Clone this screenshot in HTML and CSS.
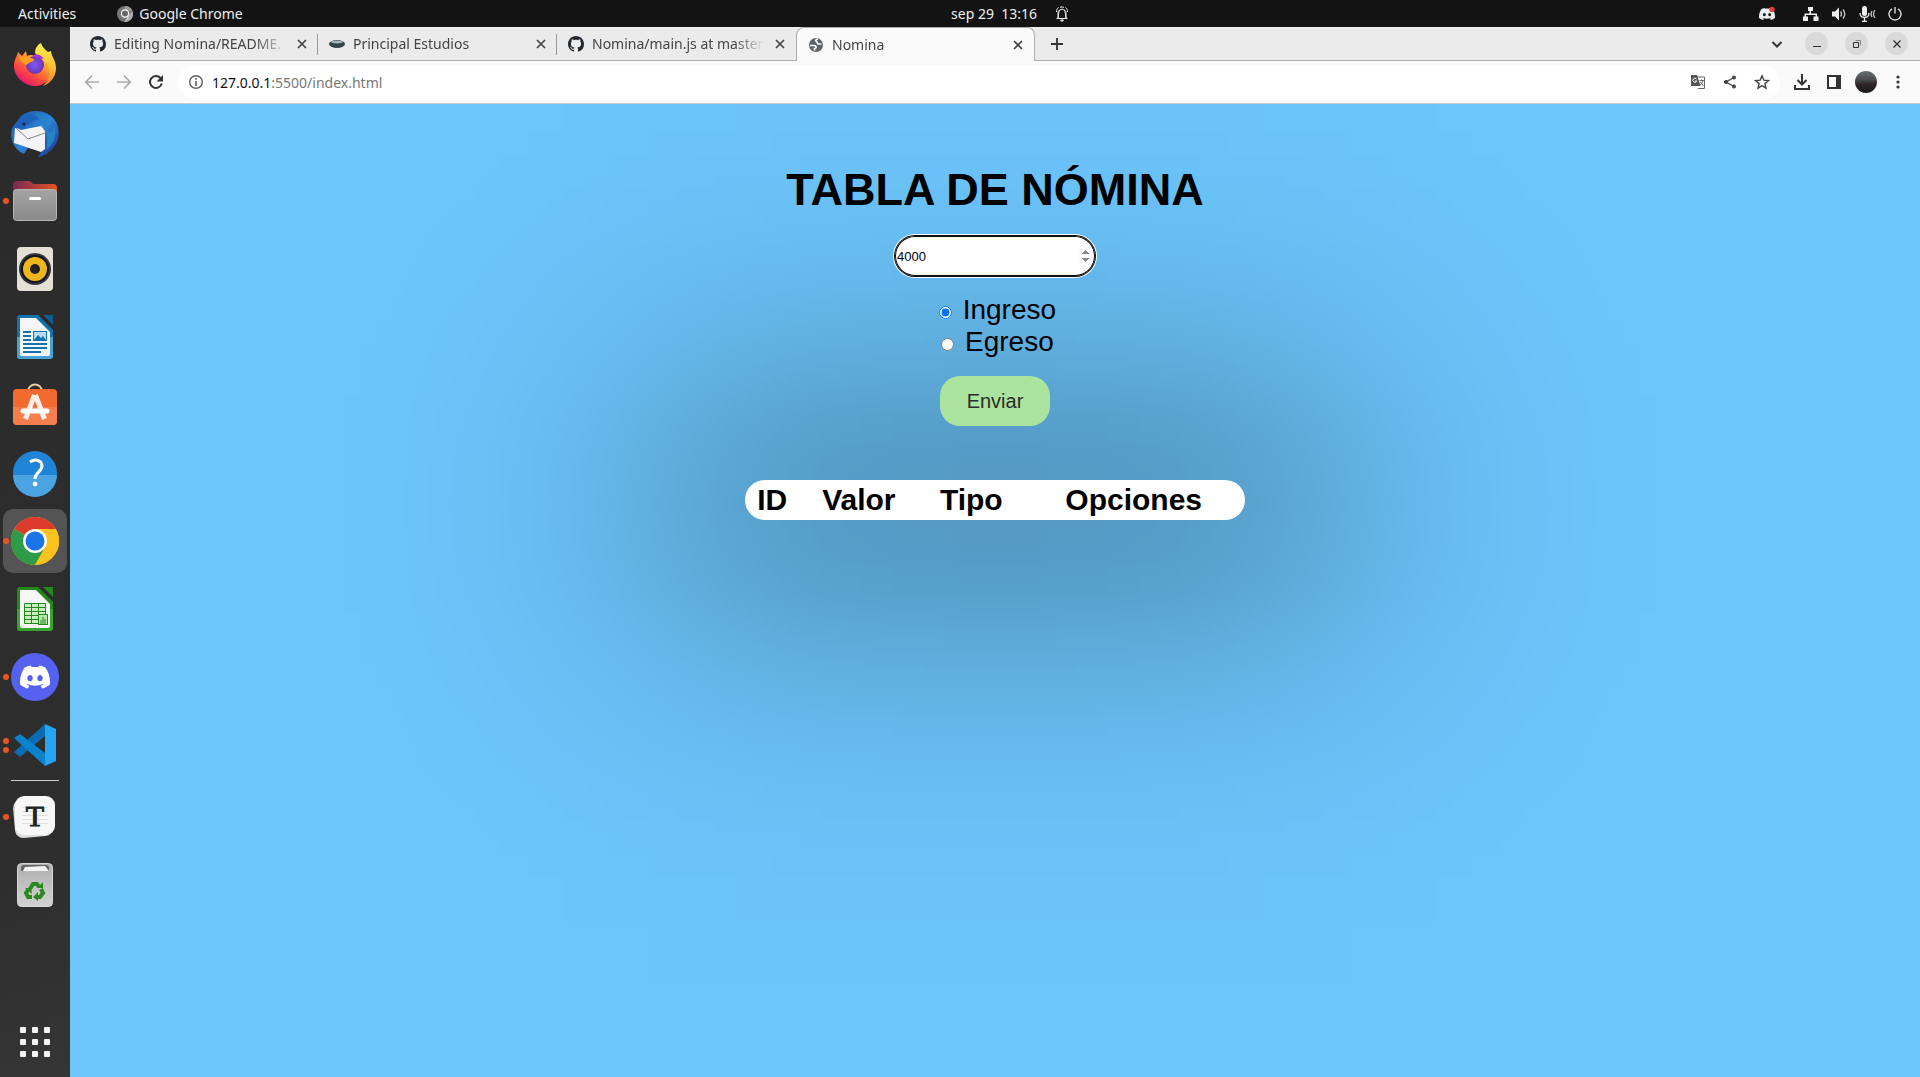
FILE: index.html
```html
<!DOCTYPE html>
<html lang="es">
<head>
<meta charset="utf-8">
<title>Nomina</title>
<link rel="stylesheet" href="styles.css">
</head>
<body>
<svg class="defs" aria-hidden="true">
  <symbol id="github" viewBox="0 0 16 16"><path d="M8 0C3.58 0 0 3.58 0 8c0 3.54 2.29 6.53 5.47 7.59.4.07.55-.17.55-.38 0-.19-.01-.82-.01-1.49-2.01.37-2.53-.49-2.69-.94-.09-.23-.48-.94-.82-1.13-.28-.15-.68-.52-.01-.53.63-.01 1.08.58 1.23.82.72 1.21 1.87.87 2.33.66.07-.52.28-.87.51-1.07-1.78-.2-3.64-.89-3.64-3.95 0-.87.31-1.59.82-2.15-.08-.2-.36-1.02.08-2.12 0 0 .67-.21 2.2.82.64-.18 1.32-.27 2-.27s1.36.09 2 .27c1.53-1.04 2.2-.82 2.2-.82.44 1.1.16 1.92.08 2.12.51.56.82 1.27.82 2.15 0 3.07-1.87 3.75-3.65 3.95.29.25.54.73.54 1.48 0 1.07-.01 1.93-.01 2.2 0 .21.15.46.55.38A8.01 8.01 0 0 0 16 8c0-4.42-3.58-8-8-8z"/></symbol>
  <symbol id="discord" viewBox="0 0 24 24"><path d="M20.317 4.3698a19.7913 19.7913 0 00-4.8851-1.5152.0741.0741 0 00-.0785.0371c-.211.3753-.4447.8648-.6083 1.2495-1.8447-.2762-3.68-.2762-5.4868 0-.1636-.3933-.4058-.8742-.6177-1.2495a.077.077 0 00-.0785-.037 19.7363 19.7363 0 00-4.8852 1.515.0699.0699 0 00-.0321.0277C.5334 9.0458-.319 13.5799.0992 18.0578a.0824.0824 0 00.0312.0561c2.0528 1.5076 4.0413 2.4228 5.9929 3.0294a.0777.0777 0 00.0842-.0276c.4616-.6304.8731-1.2952 1.226-1.9942a.076.076 0 00-.0416-.1057c-.6528-.2476-1.2743-.5495-1.8722-.8923a.077.077 0 01-.0076-.1277c.1258-.0943.2517-.1923.3718-.2914a.0743.0743 0 01.0776-.0105c3.9278 1.7933 8.18 1.7933 12.0614 0a.0739.0739 0 01.0785.0095c.1202.099.246.1981.3728.2924a.077.077 0 01-.0066.1276 12.2986 12.2986 0 01-1.873.8914.0766.0766 0 00-.0407.1067c.3604.698.7719 1.3628 1.225 1.9932a.076.076 0 00.0842.0286c1.961-.6067 3.9495-1.5219 6.0023-3.0294a.077.077 0 00.0313-.0552c.5004-5.177-.8382-9.6739-3.5485-13.6604a.061.061 0 00-.0312-.0286zM8.02 15.3312c-1.1825 0-2.1569-1.0857-2.1569-2.419 0-1.3332.9555-2.4189 2.157-2.4189 1.2108 0 2.1757 1.0952 2.1568 2.419 0 1.3332-.9555 2.4189-2.1569 2.4189zm7.9748 0c-1.1825 0-2.1569-1.0857-2.1569-2.419 0-1.3332.9554-2.4189 2.1569-2.4189 1.2108 0 2.1757 1.0952 2.1568 2.419 0 1.3332-.946 2.4189-2.1568 2.4189Z"/></symbol>
  <symbol id="close" viewBox="0 0 16 16"><path d="M4 4l8 8M12 4l-8 8" fill="none" stroke="currentColor" stroke-width="1.7"/></symbol>
  <linearGradient id="ffBody" x1="1" y1="0" x2="0.3" y2="1"><stop offset="0" stop-color="#fff14a"/><stop offset=".35" stop-color="#ffa52a"/><stop offset=".7" stop-color="#ff4a3d"/><stop offset="1" stop-color="#e3107a"/></linearGradient>
  <linearGradient id="ffTail" x1="0" y1="0" x2="0" y2="1"><stop offset="0" stop-color="#fff24d"/><stop offset=".6" stop-color="#ffbd32"/><stop offset="1" stop-color="#ff7a35"/></linearGradient>
  <radialGradient id="ffGlobe"><stop offset="0" stop-color="#7a5cf5"/><stop offset="1" stop-color="#7031b8"/></radialGradient>
  <linearGradient id="tb" x1="0" y1="0" x2="1" y2="1"><stop offset="0" stop-color="#1a4ea8"/><stop offset=".5" stop-color="#2c86d8"/><stop offset="1" stop-color="#1b2f8c"/></linearGradient>
  <linearGradient id="folder" x1="0" y1="0" x2="1" y2="0"><stop offset="0" stop-color="#762a53"/><stop offset="1" stop-color="#e8541f"/></linearGradient>
  <linearGradient id="gray" x1="0" y1="0" x2="0" y2="1"><stop offset="0" stop-color="#a4a4a4"/><stop offset="1" stop-color="#8a8a8a"/></linearGradient>
  <linearGradient id="bin" x1="0" y1="0" x2="0" y2="1"><stop offset="0" stop-color="#b0b0b0"/><stop offset="1" stop-color="#d2d2d2"/></linearGradient>
</svg>

<header class="topbar">
  <div class="top-left">
    <button class="activities">Activities</button>
    <button class="app-menu">
      <svg width="16" height="16" viewBox="0 0 16 16"><circle cx="8" cy="8" r="8" fill="#777"/><path d="M8 0a8 8 0 0 1 7.5 5H8z" fill="#999"/><path d="M15.500 5A8 8 0 0 1 8 16l3-6z" fill="#a8a8a8"/><circle cx="8" cy="7.500" r="3.600" fill="#666" stroke="#fff" stroke-width="1.200"/><path d="M11.200 9c0 3-1 5-3.500 6.500" stroke="#ddd" fill="none"/></svg>
      Google Chrome
    </button>
  </div>
  <button class="clock">sep 29&nbsp; 13:16
    <svg width="14" height="16" viewBox="0 0 14 16" fill="none" stroke="#eee"><path d="M1.500 12.500h11M3 12V7c0-5 8-5 8 0v5M5 4c-2 2-1 5-2 8M9 4c2 2 1 5 2 8M1.500 6c0-2 .5-3.500 2-4.500M12.500 6c0-2-.5-3.500-2-4.500M5 1.500c1-.7 3-.7 4 0"/><path d="M5.500 14h3l-1.500 1.500z" fill="#eee"/></svg>
  </button>
  <div class="tray">
    <svg class="tray-discord" width="16" height="16" viewBox="0 0 16 16"><use href="#discord" width="16" height="16" fill="#eee"/><circle cx="13" cy="3.500" r="2.700" fill="#e33b3b"/></svg>
    <svg width="16" height="14" viewBox="0 0 16 14" fill="#eee"><path d="M5 0h5v4H8v2.500h6v3h1.500V14h-5V9.500h2V8H3v1.500h2V14H0V9.500h1.500v-3h5V4H5z"/></svg>
    <svg width="16" height="14" viewBox="0 0 16 14"><path d="M1 4.500h3L8 .5v13l-4-4H1z" fill="#eee"/><path d="M9.500 4.500q2 2.500 0 5M12 2.500q3.500 4.500 0 9" stroke="#ccc" fill="none" stroke-width="1.300"/></svg>
    <svg width="17" height="16" viewBox="0 0 17 16"><rect x="3" y="0" width="5" height="10" rx="2.500" fill="#eee"/><path d="M1 7c0 6 9 6 9 0M5.500 11.500V15M3 15.300h5" stroke="#eee" fill="none" stroke-width="1.300"/><path d="M13 5q-2 3 0 6M16 4q-3 4 0 8" stroke="#ccc" fill="none" stroke-width="1.200"/></svg>
    <svg width="14" height="14" viewBox="0 0 14 14" fill="none" stroke="#ddd" stroke-width="1.400"><path d="M7 0v6.500M4 1.800a6 6 0 1 0 6 0"/></svg>
  </div>
</header>

<div class="desktop">
  <nav class="dock" aria-label="Dock">
    <button class="app" aria-label="Firefox"><svg width="48" height="48" viewBox="0 0 48 48"><path d="M3 25c0-7 3-9 4-14l4 4 4-5 1 5c4-2 12-1 17 2l6 8c3 12-5 20-15 20S3 36 3 25z" fill="url(#ffBody)"/><path d="M24 12c0-4 2-8 6-10 1 4 4 6 7 9l3-1c0 5 5 9 5 17 0 10-7 16-13 18 8-8 8-18 4-22-3-5-8-6-12-11z" fill="url(#ffTail)"/><circle cx="24" cy="24" r="9" fill="url(#ffGlobe)"/><path d="M21 15c4-3 10-1 12 3l-5-1z" fill="#a43ad0"/><path d="M8 16c5-2 8 1 11 1 2 0 5 1 4 2-2 3-6 2-7 5-3-1-7-4-8-8z" fill="#ffa01e"/></svg></button>
    <button class="app" aria-label="Thunderbird"><svg width="48" height="48" viewBox="0 0 48 48"><path d="M10 7C20-1 36 1 43 10c7 9 6 22-2 30-3 4-8 7-14 8l4-6-14-3-4 6C3 41-2 29 1 19z" fill="url(#tb)"/><path d="M4 18l6 3 20-4 4 5v18l-4 3L3 34z" fill="#f4f4f6"/><path d="M5 19l12 11 17-6" fill="none" stroke="#888"/><path d="M2 20c4-2 8-1 11 0 3-5 8-8 15-10-6-6-14-5-18-2-2 2-4 6-8 12z" fill="#1d62b8"/><path d="M24 4c8 0 16 8 12 21 4-2 6-2 8-8 2 10-2 19-9 24 2-8 2-15-1-23-2-5-5-8-10-14z" fill="#2483c5"/><circle cx="13" cy="15" r="1.500" fill="#17223c"/></svg></button>
    <button class="app running" aria-label="Files"><svg width="48" height="48" viewBox="0 0 48 48"><path d="M2 14V8q0-4 4-4h12q2 0 4 3h20q4 0 4 4v6H2z" fill="url(#folder)"/><rect x="2.500" y="12.500" width="43" height="31" rx="3" fill="url(#gray)" stroke="#b5b5b5"/><rect x="18" y="20" width="12" height="3" rx="1.500" fill="#fff"/></svg></button>
    <button class="app" aria-label="Rhythmbox"><svg width="48" height="48" viewBox="0 0 48 48"><rect x="6" y="2" width="36" height="44" rx="4" fill="#e4e0d5"/><circle cx="24" cy="24" r="16" fill="#34343d"/><circle cx="24" cy="24" r="14" fill="#15151a"/><circle cx="24" cy="24" r="12" fill="#edb71b"/><circle cx="24" cy="24" r="5" fill="#222"/></svg></button>
    <button class="app" aria-label="LibreOffice Writer"><svg width="48" height="48" viewBox="0 0 48 48"><path d="M9 2h18l15 15v26q0 3-3 3H9q-3 0-3-3V5q0-3 3-3z" fill="#1173ad"/><path d="M6 24h36v19q0 3-3 3H9q-3 0-3-3z" fill="#46a4d3"/><path d="M32 2h10v10z" fill="#0d5d91"/><path d="M9 5h16l14 14v22q0 2-2 2H11q-2 0-2-2z" fill="#f6f6f6"/><path d="M12 19h8M12 23h8M12 27h8M12 31h24M12 35h24M12 39h18" stroke="#1173ad" stroke-width="2"/><rect x="22.500" y="18.500" width="13" height="9" fill="#b9dcf0" stroke="#1173ad"/><path d="M23 27l4-5 3 3 2-2 3 4z" fill="#1173ad"/></svg></button>
    <button class="app" aria-label="Ubuntu Software"><svg width="48" height="48" viewBox="0 0 48 48"><path d="M17 11c0-10 14-10 14 0" stroke="#e9d0a0" stroke-width="2" fill="none"/><rect x="2" y="8" width="44" height="36" rx="4" fill="#f26a30"/><path d="M2 26h44v14q0 4-4 4H6q-4 0-4-4z" fill="#f47f4d"/><path d="M23.500 14l-9 24M24.500 14l9 24" stroke="#fff" stroke-width="5" stroke-opacity=".88"/><path d="M12 30h24" stroke="#fff" stroke-width="5" stroke-linecap="round"/></svg></button>
    <button class="app" aria-label="Help"><svg width="48" height="48" viewBox="0 0 48 48"><circle cx="24" cy="24" r="22" fill="#1f83d6"/><path d="M2 26h44a22 22 0 0 1-44 0z" fill="#4aa3e2"/><path d="M19 13c6-4 12-1 12 4 0 6-7 6-7 13" fill="none" stroke="#fff" stroke-width="3"/><circle cx="24" cy="35" r="2.400" fill="#fff"/></svg></button>
    <button class="app running active" aria-label="Google Chrome"><svg width="48" height="48" viewBox="0 0 48 48"><circle cx="24" cy="24" r="24" fill="#fcc31e"/><path d="M24 24L3.200 12A24 24 0 0 1 44.800 12z" fill="#db3a2d"/><path d="M3.200 12A24 24 0 0 0 24 48l10.400-18L24 24z" fill="#2d9b48"/><path d="M24 12h20.800A24 24 0 0 1 24 48l10.400-18z" fill="#fcc31e"/><circle cx="24" cy="24" r="12" fill="#fff"/><circle cx="24" cy="24" r="9.500" fill="#1b73e8"/></svg></button>
    <button class="app" aria-label="LibreOffice Calc"><svg width="48" height="48" viewBox="0 0 48 48"><path d="M9 2h18l15 15v26q0 3-3 3H9q-3 0-3-3V5q0-3 3-3z" fill="#23891b"/><path d="M6 24h36v19q0 3-3 3H9q-3 0-3-3z" fill="#35a52b"/><path d="M32 2h10v10z" fill="#23891b"/><path d="M9 5h16l14 14v22q0 2-2 2H11q-2 0-2-2z" fill="#f6f6f6"/><path d="M13.500 18.500h21v20h-21zM13.500 22.500h21M13.500 26.500h21M13.500 30.500h21M13.500 34.500h21M20.500 18.500v20M27.500 18.500v20" fill="#c9efc0" stroke="#23891b"/><rect x="27.500" y="29.500" width="9" height="10" fill="#b8e8a8" stroke="#23891b"/><path d="M30 39v-4M32 39v-7M34 39v-5" stroke="#23891b"/></svg></button>
    <button class="app running" aria-label="Discord"><svg width="48" height="48" viewBox="0 0 48 48"><circle cx="24" cy="24" r="24" fill="#5562f0"/><use href="#discord" x="9" y="9" width="30" height="30" fill="#fff"/></svg></button>
    <button class="app running twice" aria-label="Visual Studio Code"><svg width="48" height="48" viewBox="0 0 48 48"><path d="M34 3v12L9 36l-6-5z" fill="#0a6cb2"/><path d="M3 17l6-4 25 19v13z" fill="#0b83cc"/><path d="M34 3l11 5v32l-11 5z" fill="#27a3f2"/></svg></button>
    <hr class="dock-line">
    <button class="app running" aria-label="Typora"><svg width="48" height="48" viewBox="0 0 48 48"><rect x="3" y="6" width="38" height="38" rx="8" fill="#ddd" transform="rotate(-5 22 25)"/><rect x="4" y="3" width="40" height="39" rx="9" fill="#f7f7f7"/><path d="M11 14.500h26M11 18.500h26M11 22.500h26M11 26.500h26M11 30.500h26" stroke="#e0e0e0"/><text x="24" y="33" class="typora-letter">T</text></svg></button>
    <button class="app" aria-label="Trash"><svg width="48" height="48" viewBox="0 0 48 48"><rect x="6.500" y="2.500" width="35" height="43" rx="4" fill="url(#bin)" stroke="#d8d8d8"/><path d="M10 10V7q0-3 3-3h22q3 0 3 3v3z" fill="#666"/><path d="M12 10l2-4 20-1 4 5z" fill="#f2f2f2"/><g fill="none" stroke="#2a8a20" stroke-width="4"><path d="M19 28l3-5h4l2 3M30 28l2 4-3 4h-4M21 36h-4l-2-4 2-3"/></g><path d="M26 27h6v-6zM27 31v9l-5-4zM14 27h6l1 6z" fill="#2a8a20"/></svg></button>
    <button class="app show-apps" aria-label="Show applications"><svg width="48" height="48" viewBox="0 0 48 48" fill="#f2f2f2"><rect x="9" y="9" width="6" height="6" rx="1"/><rect x="21" y="9" width="6" height="6" rx="1"/><rect x="33" y="9" width="6" height="6" rx="1"/><rect x="9" y="21" width="6" height="6" rx="1"/><rect x="21" y="21" width="6" height="6" rx="1"/><rect x="33" y="21" width="6" height="6" rx="1"/><rect x="9" y="33" width="6" height="6" rx="1"/><rect x="21" y="33" width="6" height="6" rx="1"/><rect x="33" y="33" width="6" height="6" rx="1"/></svg></button>
  </nav>

  <div class="browser">
    <div class="tabstrip">
      <div class="tab"><svg class="favicon" width="16" height="16" fill="#24292f"><use href="#github"/></svg><a class="tab-title" href="#">Editing Nomina/README.</a><button class="icon-btn" aria-label="Close tab"><svg width="16" height="16"><use href="#close"/></svg></button></div>
      <div class="tab"><svg class="favicon" width="16" height="16" viewBox="0 0 16 16"><ellipse cx="8" cy="8" rx="8" ry="4" fill="#33434c"/><ellipse cx="8" cy="6" rx="6" ry="1.500" fill="#a3b5bd"/></svg><a class="tab-title" href="#">Principal Estudios</a><button class="icon-btn" aria-label="Close tab"><svg width="16" height="16"><use href="#close"/></svg></button></div>
      <div class="tab"><svg class="favicon" width="16" height="16" fill="#24292f"><use href="#github"/></svg><a class="tab-title" href="#">Nomina/main.js at master</a><button class="icon-btn" aria-label="Close tab"><svg width="16" height="16"><use href="#close"/></svg></button></div>
      <div class="tab current"><svg class="favicon" width="16" height="16" viewBox="0 0 16 16"><circle cx="8" cy="8" r="7" fill="#5f6368"/><path d="M10 2c-2 .5-3 1.500-1.500 2.500s0 2 2 2.500h3M2 8.500h4c2.500 0 3 3 .5 3v2" stroke="#fafafa" stroke-width="1.700" fill="none"/></svg><a class="tab-title" href="#">Nomina</a><button class="icon-btn" aria-label="Close tab"><svg width="16" height="16"><use href="#close"/></svg></button></div>
      <button class="icon-btn new-tab" aria-label="New tab"><svg width="16" height="16" viewBox="0 0 16 16"><path d="M8 2v12M2 8h12" stroke="#333" stroke-width="1.800"/></svg></button>
      <div class="window-buttons">
        <button class="icon-btn" aria-label="Search tabs"><svg width="16" height="16" viewBox="0 0 16 16"><path d="M3.500 6L8 10.500 12.500 6" fill="none" stroke="#333" stroke-width="2"/></svg></button>
        <button class="round" aria-label="Minimize"><svg width="16" height="16" viewBox="0 0 16 16"><path d="M4 10.500h8" stroke="#333"/></svg></button>
        <button class="round" aria-label="Restore"><svg width="16" height="16" viewBox="0 0 16 16"><path d="M4.500 6.500h5v5h-5z" fill="none" stroke="#333"/><path d="M6.500 4.500h5v5" fill="none" stroke="#888"/></svg></button>
        <button class="round" aria-label="Close"><svg width="16" height="16" viewBox="0 0 16 16"><path d="M4.500 4.500l7 7M11.500 4.500l-7 7" stroke="#333" stroke-width="1.300"/></svg></button>
      </div>
    </div>

    <div class="toolbar">
      <div class="nav-buttons">
        <button class="icon-btn" aria-label="Back"><svg width="16" height="16" viewBox="0 0 16 16"><path d="M15 8H2M8 1.500L1.800 8 8 14.500" fill="none" stroke="#aaa" stroke-width="1.700"/></svg></button>
        <button class="icon-btn" aria-label="Forward"><svg width="16" height="16" viewBox="0 0 16 16"><path d="M1 8h13M8 1.500L14.200 8 8 14.500" fill="none" stroke="#aaa" stroke-width="1.700"/></svg></button>
        <button class="icon-btn" aria-label="Reload"><svg width="16" height="16" viewBox="0 0 16 16"><path d="M13.800 9.500A6 6 0 1 1 12.500 4" fill="none" stroke="#333" stroke-width="2"/><path d="M15 1v6.500H8.500z" fill="#333"/></svg></button>
      </div>
      <div class="omnibox">
        <button class="icon-btn" aria-label="Site information"><svg width="16" height="16" viewBox="0 0 16 16"><circle cx="8" cy="8" r="6.300" fill="none" stroke="#5f6368" stroke-width="1.500"/><path d="M8 7v5M8 4v1.800" stroke="#5f6368" stroke-width="1.600"/></svg></button>
        <div class="url" role="textbox" aria-label="Address"><span class="host">127.0.0.1</span>:5500/index.html</div>
        <button class="icon-btn" aria-label="Translate"><svg width="16" height="16" viewBox="0 0 16 16"><path d="M7 3h7.500v11.500H8" fill="none" stroke="#666"/><path d="M1 1h6l3.500 11H1z" fill="#555"/><path d="M6.500 5a2 2 0 1 0 .3 2H5" stroke="#fff" fill="none"/><path d="M9.500 6.500H14M11.500 5.500v1M13 6.500c0 2-2 4-3 4.500M10.500 8l3 4" stroke="#666" fill="none"/></svg></button>
        <button class="icon-btn" aria-label="Share"><svg width="16" height="16" viewBox="0 0 16 16" fill="#444" stroke="#444"><path d="M12 3.500L4 8l8 4.500" fill="none" stroke-width="1.400"/><circle cx="12" cy="3.500" r="1.600"/><circle cx="4" cy="8" r="1.600"/><circle cx="12" cy="12.500" r="1.600"/></svg></button>
        <button class="icon-btn" aria-label="Bookmark"><svg width="16" height="16" viewBox="0 0 16 16"><path d="M8 1.800l1.800 4.300 4.700.4-3.600 3.100 1.100 4.600L8 11.700l-4 2.500 1.100-4.600L1.500 6.500l4.700-.4z" fill="none" stroke="#444" stroke-width="1.400"/></svg></button>
      </div>
      <div class="actions">
        <button class="icon-btn" aria-label="Downloads"><svg width="16" height="16" viewBox="0 0 16 16"><path d="M8 0v10M3.500 6L8 10.500 12.500 6M1 11v4h14v-4" fill="none" stroke="#333" stroke-width="2"/></svg></button>
        <button class="icon-btn" aria-label="Side panel"><svg width="16" height="16" viewBox="0 0 16 16"><path d="M2 2h12v12H2z" fill="none" stroke="#333" stroke-width="2"/><path d="M10 2h4v12h-4z" fill="#333"/></svg></button>
        <button class="avatar" aria-label="Profile"></button>
        <button class="icon-btn" aria-label="Menu"><svg width="16" height="16" viewBox="0 0 16 16" fill="#333"><circle cx="8" cy="3" r="1.600"/><circle cx="8" cy="8" r="1.600"/><circle cx="8" cy="13" r="1.600"/></svg></button>
      </div>
    </div>

    <main class="page">
      <h1>TABLA DE NÓMINA</h1>
      <form class="form">
        <input class="amount" type="number" value="4000" aria-label="Valor">
        <div class="kinds">
          <div><input type="radio" name="tipo" id="ingreso" checked> <label for="ingreso">Ingreso</label></div>
          <div><input type="radio" name="tipo" id="egreso"> <label for="egreso">Egreso</label></div>
        </div>
        <button class="send" type="button">Enviar</button>
      </form>
      <table class="payroll">
        <thead><tr><th scope="col">ID</th><th scope="col">Valor</th><th scope="col">Tipo</th><th scope="col">Opciones</th></tr></thead>
      </table>
    </main>
  </div>
</div>
</body>
</html>
```
FILE: styles.css
```css
* { box-sizing: border-box; }
body {
  margin: 0;
  min-height: 100vh;
  display: flex;
  flex-direction: column;
  font-family: "Noto Sans", "Open Sans", sans-serif;
  font-size: 14px;
}
svg { display: block; flex: none; }
button { font: inherit; color: inherit; background: none; border: 0; padding: 0; }
.defs { position: absolute; width: 0; height: 0; }

/* Desktop top bar */
.topbar {
  display: grid;
  grid-template-columns: 1fr auto 1fr;
  align-items: center;
  height: 27px;
  padding: 0 18px;
  background: #131313;
  color: #eee;
}
.top-left, .app-menu, .clock, .tray { display: flex; align-items: center; }
.top-left { gap: 41px; }
.app-menu { gap: 6px; }
.clock { gap: 18px; padding-left: 100px; }
.tray { justify-content: flex-end; gap: 12px; }
.tray-discord { margin-right: 16px; }

.desktop { flex: 1; display: flex; }

/* Dock */
.dock {
  width: 70px;
  display: flex;
  flex-direction: column;
  align-items: center;
  gap: 4px;
  padding: 6px 0 3px;
  background: linear-gradient(165deg, #2a2a2a 0%, #2e2e2e 80%, #353535 100%);
}
.app {
  position: relative;
  width: 64px;
  height: 64px;
  display: grid;
  place-items: center;
  border-radius: 10px;
}
.app.active { background: #545454; }
.app.running::before {
  content: "";
  position: absolute;
  left: 0;
  top: 29px;
  width: 6px;
  height: 6px;
  border-radius: 50%;
  background: #e95420;
}
.app.twice::before { top: 25px; box-shadow: 0 9px #e95420; }
.dock-line { width: 48px; height: 1px; margin: -1px 0 0; border: 0; background: #ccc; }
.show-apps { margin-top: auto; }
.typora-letter { font: 30px "Liberation Serif", serif; text-anchor: middle; fill: #222; stroke: #222; }

/* Browser window */
.browser { flex: 1; min-width: 0; display: flex; flex-direction: column; }
.tabstrip {
  display: flex;
  height: 34px;
  padding-left: 9px;
  background: #ebebeb;
  border-bottom: 1px solid #adadad;
  color: #444;
}
.tab {
  width: 239px;
  display: flex;
  align-items: center;
  gap: 8px;
  padding: 0 8px 0 11px;
  position: relative;
}
.tab:not(.current):not(:nth-child(3))::after {
  content: "";
  position: absolute;
  right: 0;
  top: 7px;
  width: 1px;
  height: 21px;
  background: #999;
}
.tab.current {
  height: 34px;
  background: #fafafa;
  border: 1px solid #adadad;
  border-bottom: 0;
  border-radius: 8px 8px 0 0;
  z-index: 1;
}
.tab-title {
  flex: 1;
  overflow: hidden;
  white-space: nowrap;
  color: inherit;
  text-decoration: none;
  mask-image: linear-gradient(90deg, #000 calc(100% - 30px), transparent);
}
.icon-btn { width: 16px; height: 16px; flex: none; }
.new-tab { margin: 9px 0 0 14px; }
.window-buttons { margin-left: auto; display: flex; align-items: center; gap: 17px; padding-right: 12px; }
.window-buttons .icon-btn { margin-right: 3px; }
.round { width: 23px; height: 23px; border-radius: 50%; background: #dadada; display: grid; place-items: center; }

.toolbar {
  display: flex;
  align-items: center;
  height: 43px;
  padding: 0 14px;
  background: #fafafa;
  border-bottom: 1px solid #c8c8c8;
}
.nav-buttons { display: flex; gap: 16px; }
.omnibox {
  flex: 1;
  display: flex;
  align-items: center;
  gap: 16px;
  height: 34px;
  margin: 0 14px;
  padding: 0 10px;
  border-radius: 17px;
  background: #fff;
}
.url { flex: 1; margin-left: -8px; color: #777; }
.host { color: #111; }
.actions { display: flex; align-items: center; gap: 16px; }
.avatar {
  width: 22px;
  height: 22px;
  margin: 0 -3px;
  border-radius: 50%;
  background: linear-gradient(180deg, #65706f 0%, #4a4c4d 40%, #2e2425 60%, #1a1a1c 100%);
}

/* Payroll page */
.page {
  flex: 1;
  display: flex;
  flex-direction: column;
  align-items: center;
  padding-top: 60px;
  position: relative;
  isolation: isolate;
  overflow: hidden;
  background: #6cc5fb;
  color: #000;
  font-family: "Liberation Sans", Arial, sans-serif;
}
/* Wide soft shade behind the form and the table */
.page::before {
  content: "";
  position: absolute;
  z-index: -1;
  top: -100px;
  left: calc(50% - 735px);
  width: 1480px;
  height: 1000px;
  background: linear-gradient(180deg,
    rgba(0,0,0,0) 0, rgba(0,0,0,.002) 50px, rgba(0,0,0,.006) 115px, rgba(0,0,0,.014) 165px,
    rgba(0,0,0,.031) 215px, rgba(0,0,0,.05) 250px, rgba(0,0,0,.073) 285px, rgba(0,0,0,.114) 335px,
    rgba(0,0,0,.147) 370px, rgba(0,0,0,.183) 410px, rgba(0,0,0,.208) 450px, rgba(0,0,0,.22) 500px,
    rgba(0,0,0,.208) 550px, rgba(0,0,0,.183) 590px, rgba(0,0,0,.147) 630px, rgba(0,0,0,.114) 665px,
    rgba(0,0,0,.073) 715px, rgba(0,0,0,.05) 750px, rgba(0,0,0,.031) 785px, rgba(0,0,0,.014) 835px,
    rgba(0,0,0,.006) 885px, rgba(0,0,0,.002) 950px, rgba(0,0,0,0) 1000px);
  mask-image: linear-gradient(90deg,
    rgba(0,0,0,0) 0, rgba(0,0,0,.004) 60px, rgba(0,0,0,.023) 140px, rgba(0,0,0,.081) 215px,
    rgba(0,0,0,.159) 265px, rgba(0,0,0,.274) 315px, rgba(0,0,0,.39) 355px, rgba(0,0,0,.5) 390px,
    rgba(0,0,0,.61) 425px, rgba(0,0,0,.726) 465px, rgba(0,0,0,.841) 515px, rgba(0,0,0,.92) 565px,
    rgba(0,0,0,.977) 640px, #000 740px, rgba(0,0,0,.977) 840px, rgba(0,0,0,.92) 915px,
    rgba(0,0,0,.841) 965px, rgba(0,0,0,.726) 1015px, rgba(0,0,0,.61) 1055px, rgba(0,0,0,.5) 1090px,
    rgba(0,0,0,.39) 1125px, rgba(0,0,0,.274) 1165px, rgba(0,0,0,.159) 1215px, rgba(0,0,0,.081) 1265px,
    rgba(0,0,0,.023) 1340px, rgba(0,0,0,.004) 1420px, rgba(0,0,0,0) 1480px);
}
h1 { margin: 0 0 20px; font-size: 45px; line-height: 52px; }
.form { display: flex; flex-direction: column; align-items: center; gap: 18px; margin-bottom: 54px; }
.amount {
  width: 200px;
  height: 40px;
  padding: 0 2px;
  border: 0;
  border-radius: 20px;
  outline: 0;
  background: #fff;
  box-shadow: 0 0 0 1px #101010, 0 0 0 2px #fff, inset 0 0 0 1px #101010;
  font: 13px "Liberation Sans", Arial, sans-serif;
}
.amount::-webkit-inner-spin-button { opacity: 1; }
.kinds { font-size: 28px; line-height: 32px; text-align: center; }
.send {
  width: 110px;
  height: 50px;
  border-radius: 20px;
  background: #abe49f;
  color: #2b2b2b;
  font-size: 20px;
}
.payroll {
  width: 500px;
  height: 40px;
  border-radius: 20px;
  background: #fff;
  font-size: 30px;
}
.payroll th { padding: 1px; line-height: 34px; }
```
